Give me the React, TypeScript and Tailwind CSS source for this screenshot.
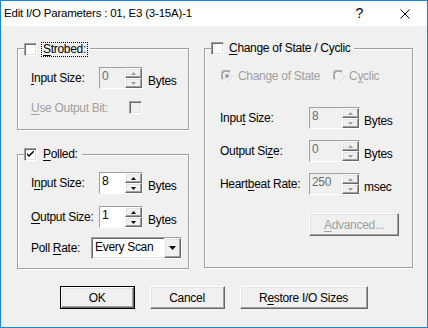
import type { ReactNode } from "react";

const raised =
  "border border-t-white border-l-white border-b-[#696969] border-r-[#696969] shadow-[inset_-1px_-1px_0_#a0a0a0,inset_1px_1px_0_#e3e3e3]";
const sunken =
  "border border-t-[#a0a0a0] border-l-[#a0a0a0] border-b-white border-r-white shadow-[inset_1px_1px_0_#696969,inset_-1px_-1px_0_#e3e3e3]";
const etched = "border border-[#a0a0a0] shadow-[inset_1px_1px_0_white,1px_1px_0_white]";

// small arrows for the spin buttons
const Arrow = ({ up, disabled }: { up?: boolean; disabled?: boolean }) => (
  <svg width="5" height="3" viewBox="0 0 5 3">
    <path d={up ? "M2.5 0 L5 3 L0 3 Z" : "M0 0 L5 0 L2.5 3 Z"} fill={disabled ? "#a0a0a0" : "#000"} />
  </svg>
);

const SpinBox = ({ value, disabled, wide }: { value: string; disabled?: boolean; wide?: boolean }) => (
  <div className={`${sunken} flex h-[22px] shrink-0 ${wide ? "w-[51px]" : "w-[44px]"}`}>
    <div
      className={`flex-1 pl-[2px] pt-[1px] text-[12px] leading-[15px] ${
        disabled ? "bg-[#f0f0f0] text-[#6d6d6d]" : "bg-white text-black"
      }`}
    >
      {value}
    </div>
    <div className="flex w-[17px] flex-col">
      <div className={`${raised} flex h-[10px] items-center justify-center bg-[#f0f0f0]`}>
        <Arrow up disabled={disabled} />
      </div>
      <div className={`${raised} flex h-[10px] items-center justify-center bg-[#f0f0f0]`}>
        <Arrow disabled={disabled} />
      </div>
    </div>
  </div>
);

const CheckBox = ({ checked, disabled }: { checked?: boolean; disabled?: boolean }) => (
  <div
    className={`${sunken} flex h-[13px] w-[13px] shrink-0 items-center justify-center ${
      disabled ? "bg-[#f0f0f0]" : "bg-white"
    }`}
  >
    {checked && (
      <svg width="7" height="7" viewBox="0 0 7 7">
        <path d="M0 2 L0 4 L2 6 L7 1 L7 -1 L2 4 Z" fill="#000" />
      </svg>
    )}
  </div>
);

const Radio = ({ checked }: { checked?: boolean }) => (
  <svg width="12" height="12" viewBox="0 0 12 12" className="shrink-0">
    <circle cx="6" cy="6" r="5.5" fill="#f0f0f0" />
    <path d="M1.2 9.5 A5.5 5.5 0 0 1 9.5 1.2" stroke="#a0a0a0" strokeWidth="1" fill="none" />
    <path d="M2.2 8.6 A4.4 4.4 0 0 1 8.6 2.2" stroke="#696969" strokeWidth="1" fill="none" />
    <path d="M10.8 2.5 A5.5 5.5 0 0 1 2.5 10.8" stroke="#ffffff" strokeWidth="1" fill="none" />
    <path d="M9.8 3.4 A4.4 4.4 0 0 1 3.4 9.8" stroke="#e3e3e3" strokeWidth="1" fill="none" />
    {checked && <circle cx="6" cy="6" r="2" fill="#a0a0a0" />}
  </svg>
);

const Group = ({ header, className, children }: { header: ReactNode; className: string; children: ReactNode }) => (
  <div className={`relative ${etched} ${className}`}>
    <div className="absolute left-[6px] top-[-7px] flex items-center gap-[4px] bg-[#f0f0f0] pr-[2px]">{header}</div>
    {children}
  </div>
);

const Button = ({ children, isDefault, disabled, className }: { children: ReactNode; isDefault?: boolean; disabled?: boolean; className: string }) => (
  <div className={`${isDefault ? "border border-black" : ""} ${className}`}>
    <div
      className={`${raised} flex h-full w-full items-center justify-center bg-[#f0f0f0] ${
        disabled ? "text-[#a0a0a0]" : "text-black"
      }`}
    >
      {children}
    </div>
  </div>
);

const U = ({ children }: { children: ReactNode }) => <span className="underline underline-offset-2">{children}</span>;

const App = () => {
  return (
    <div className="flex h-[328px] w-[428px] flex-col border border-[#1883d7] bg-[#f0f0f0] font-['Liberation_Sans',sans-serif] text-[12px] tracking-[-0.3px] text-black">
      {/* title bar */}
      <div className="flex h-[25px] shrink-0 items-center bg-white pl-[3px] text-[11.5px] tracking-[-0.2px]">
        <span className="flex-1">Edit I/O Parameters : 01, E3 (3-15A)-1</span>
        <span className="mr-[37px] text-[14px]">?</span>
        <svg width="10" height="10" viewBox="0 0 10 10" className="mr-[17px]">
          <path d="M0.5 0.5 L9.5 9.5 M9.5 0.5 L0.5 9.5" stroke="#000" strokeWidth="1" />
        </svg>
      </div>

      <div className="flex flex-col pl-[16px] pt-[22px]">
        <div className="flex items-start gap-[15px]">
          {/* left column */}
          <div className="flex w-[172px] flex-col">
            <Group
              className="pb-[15px] pl-[13px] pt-[18px]"
              header={
                <>
                  <CheckBox />
                  <span className="border border-dotted border-black px-[1px] leading-[13px]">
                    <U>S</U>trobed:
                  </span>
                </>
              }
            >
              <div className="flex h-[22px] items-center">
                <span className="w-[68px]">
                  <U>I</U>nput Size:
                </span>
                <SpinBox value="0" disabled />
                <span className="ml-[5px] mt-[6px]">Bytes</span>
              </div>
              <div className="mt-[12px] flex h-[13px] items-center">
                <span className="w-[98px] text-[#a0a0a0]">
                  <U>U</U>se Output Bit:
                </span>
                <CheckBox disabled />
              </div>
            </Group>

            <Group
              className="mt-[24px] pb-[9px] pl-[13px] pt-[17px]"
              header={
                <>
                  <CheckBox checked />
                  <span className="px-[2px] leading-[13px]">
                    <U>P</U>olled:
                  </span>
                </>
              }
            >
              <div className="flex h-[22px] items-center">
                <span className="w-[68px]">
                  I<U>n</U>put Size:
                </span>
                <SpinBox value="8" />
                <span className="ml-[5px] mt-[6px]">Bytes</span>
              </div>
              <div className="mt-[12px] flex h-[22px] items-center">
                <span className="w-[68px]">
                  <U>O</U>utput Size:
                </span>
                <SpinBox value="1" />
                <span className="ml-[5px] mt-[6px]">Bytes</span>
              </div>
              <div className="mt-[9px] flex h-[22px] items-center">
                <span className="w-[60px]">
                  Poll <U>R</U>ate:
                </span>
                <div className={`${sunken} flex h-[22px] w-[91px] bg-white`}>
                  <span className="flex-1 pl-[3px] text-[12px] leading-[18px]">Every Scan</span>
                  <div className={`${raised} flex w-[17px] items-center justify-center bg-[#f0f0f0]`}>
                    <svg width="7" height="4" viewBox="0 0 7 4">
                      <path d="M0 0 L7 0 L3.5 4 Z" fill="#000" />
                    </svg>
                  </div>
                </div>
              </div>
            </Group>
          </div>

          {/* right column */}
          <Group
            className="h-[220px] w-[209px] pl-[15px] pt-[20px]"
            header={
              <>
                <CheckBox />
                <span className="px-[1px] leading-[13px]">
                  <U>C</U>hange of State / Cyclic
                </span>
              </>
            }
          >
            <div className="ml-[1px] flex h-[13px] items-center text-[#a0a0a0]">
              <Radio checked />
              <span className="ml-[5px] w-[95px]">Change of State</span>
              <Radio />
              <span className="ml-[4px]">
                C<U>y</U>clic
              </span>
            </div>
            <div className="mt-[25px] flex h-[22px] items-center">
              <span className="w-[89px]">
                Inpu<U>t</U> Size:
              </span>
              <SpinBox value="8" disabled wide />
              <span className="ml-[4px] mt-[6px]">Bytes</span>
            </div>
            <div className="mt-[11px] flex h-[22px] items-center">
              <span className="w-[89px]">
                Output Si<U>z</U>e:
              </span>
              <SpinBox value="0" disabled wide />
              <span className="ml-[4px] mt-[6px]">Bytes</span>
            </div>
            <div className="mt-[11px] flex h-[22px] items-center">
              <span className="w-[89px] whitespace-nowrap">
                Heart<U>b</U>eat Rate:
              </span>
              <SpinBox value="250" disabled wide />
              <span className="ml-[4px] mt-[6px]">msec</span>
            </div>
            <div className="mt-[18px] flex pl-[89px]">
              <Button disabled className="h-[23px] w-[90px]">
                <U>A</U>dvanced...
              </Button>
            </div>
          </Group>
        </div>
      </div>

      {/* dialog buttons */}
      <div className="mt-[17px] flex justify-center gap-[15px] pr-[1px]">
        <Button isDefault className="h-[23px] w-[75px]">
          OK
        </Button>
        <Button className="h-[23px] w-[75px]">Cancel</Button>
        <Button className="h-[23px] w-[128px]">
          R<U>e</U>store I/O Sizes
        </Button>
      </div>
    </div>
  );
};

export default App;
